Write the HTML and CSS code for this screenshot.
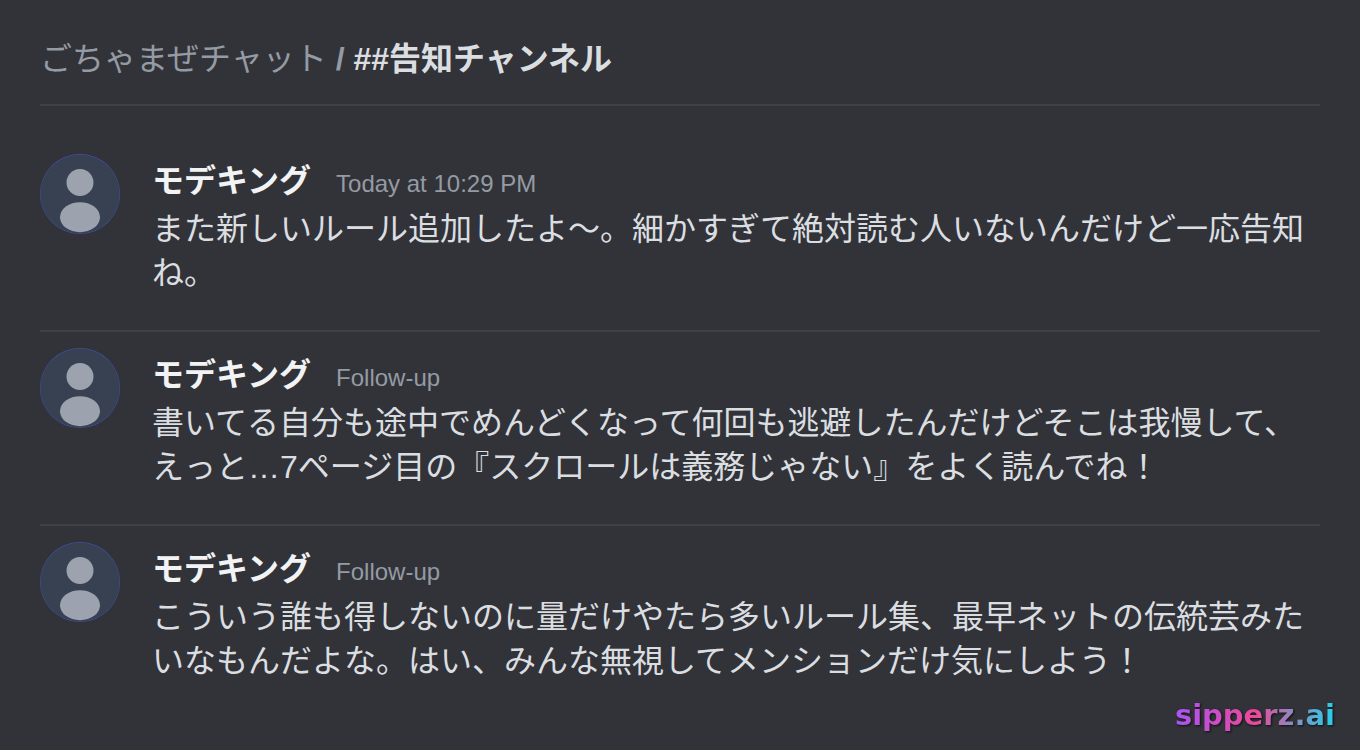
FILE: index.html
```html
<!DOCTYPE html>
<html lang="ja">
<head>
  <meta charset="UTF-8" />
  <meta name="viewport" content="width=device-width, initial-scale=1.0" />
  <title>##告知チャンネル</title>
  <link rel="stylesheet" href="styles.css">
</head>
<body>
  <main class="chat">
    <header class="chat-header">
      <h1><span class="server">ごちゃまぜチャット</span> <span class="slash">/</span> ##告知チャンネル</h1>
    </header>

    <article class="message">
      <svg class="avatar" viewBox="0 0 80 80" aria-hidden="true">
        <circle class="avatar-ring" cx="40" cy="40" r="40" />
        <circle class="avatar-bg" cx="40" cy="40" r="39.6" />
        <circle class="avatar-person" cx="40" cy="28.5" r="13.5" />
        <ellipse class="avatar-person" cx="40" cy="63.2" rx="20" ry="15" />
      </svg>
      <div class="body">
        <div class="meta"><span class="name">モデキング</span><span class="time">Today at 10:29 PM</span></div>
        <p class="text">また新しいルール追加したよ〜。細かすぎて絶対読む人いないんだけど一応告知ね。</p>
      </div>
    </article>

    <article class="message">
      <svg class="avatar" viewBox="0 0 80 80" aria-hidden="true">
        <circle class="avatar-ring" cx="40" cy="40" r="40" />
        <circle class="avatar-bg" cx="40" cy="40" r="39.6" />
        <circle class="avatar-person" cx="40" cy="28.5" r="13.5" />
        <ellipse class="avatar-person" cx="40" cy="63.2" rx="20" ry="15" />
      </svg>
      <div class="body">
        <div class="meta"><span class="name">モデキング</span><span class="time">Follow-up</span></div>
        <p class="text">書いてる自分も途中でめんどくなって何回も逃避したんだけどそこは我慢して、えっと…7ページ目の『スクロールは義務じゃない』をよく読んでね！</p>
      </div>
    </article>

    <article class="message">
      <svg class="avatar" viewBox="0 0 80 80" aria-hidden="true">
        <circle class="avatar-ring" cx="40" cy="40" r="40" />
        <circle class="avatar-bg" cx="40" cy="40" r="39.6" />
        <circle class="avatar-person" cx="40" cy="28.5" r="13.5" />
        <ellipse class="avatar-person" cx="40" cy="63.2" rx="20" ry="15" />
      </svg>
      <div class="body">
        <div class="meta"><span class="name">モデキング</span><span class="time">Follow-up</span></div>
        <p class="text">こういう誰も得しないのに量だけやたら多いルール集、最早ネットの伝統芸みたいなもんだよな。はい、みんな無視してメンションだけ気にしよう！</p>
      </div>
    </article>
  </main>
  <div class="watermark">sipperz.ai</div>
</body>
</html>
```
FILE: styles.css
```css
* { box-sizing: border-box; }
body { margin: 0; background: #323338; color: #dbdee1; font-family: "Liberation Sans", "Noto Sans CJK JP", sans-serif; }
.chat { padding: 35px 40px 0; }
.chat-header { padding-bottom: 21px; margin-bottom: 32px; border-bottom: 2px solid #3f4147; }
h1 { margin: 0; font-size: 32px; line-height: 48px; font-weight: 700; }
.server { color: #949ba4; font-weight: 400; }
.slash { color: #949ba4; }
.message { display: flex; gap: 32px; padding: 16px 0 35px; }
.message + .message { border-top: 2px solid #3f4147; }
.avatar { flex: none; width: 80px; height: 80px; }
.avatar-ring { fill: #4752c4; }
.avatar-bg { fill: #374151; }
.avatar-person { fill: #9ca3af; }
.body { flex: 1; padding-top: 4px; }
.meta { display: flex; align-items: baseline; gap: 25px; line-height: 46px; }
.name { color: #f2f3f5; font-size: 32px; font-weight: 700; }
.time { color: #949ba4; font-size: 24px; }
.text { margin: 0; font-size: 32px; line-height: 44px; }
.watermark {
  position: absolute; right: 25px; bottom: 17px;
  font: 700 29px/36px "DejaVu Sans", sans-serif;
  color: transparent;
  background: linear-gradient(90deg, #a855f7, #ec4899, #22d3ee);
  -webkit-background-clip: text; background-clip: text;
  filter: drop-shadow(1px 1px 1px rgba(0, 0, 0, 0.7));
}
```
